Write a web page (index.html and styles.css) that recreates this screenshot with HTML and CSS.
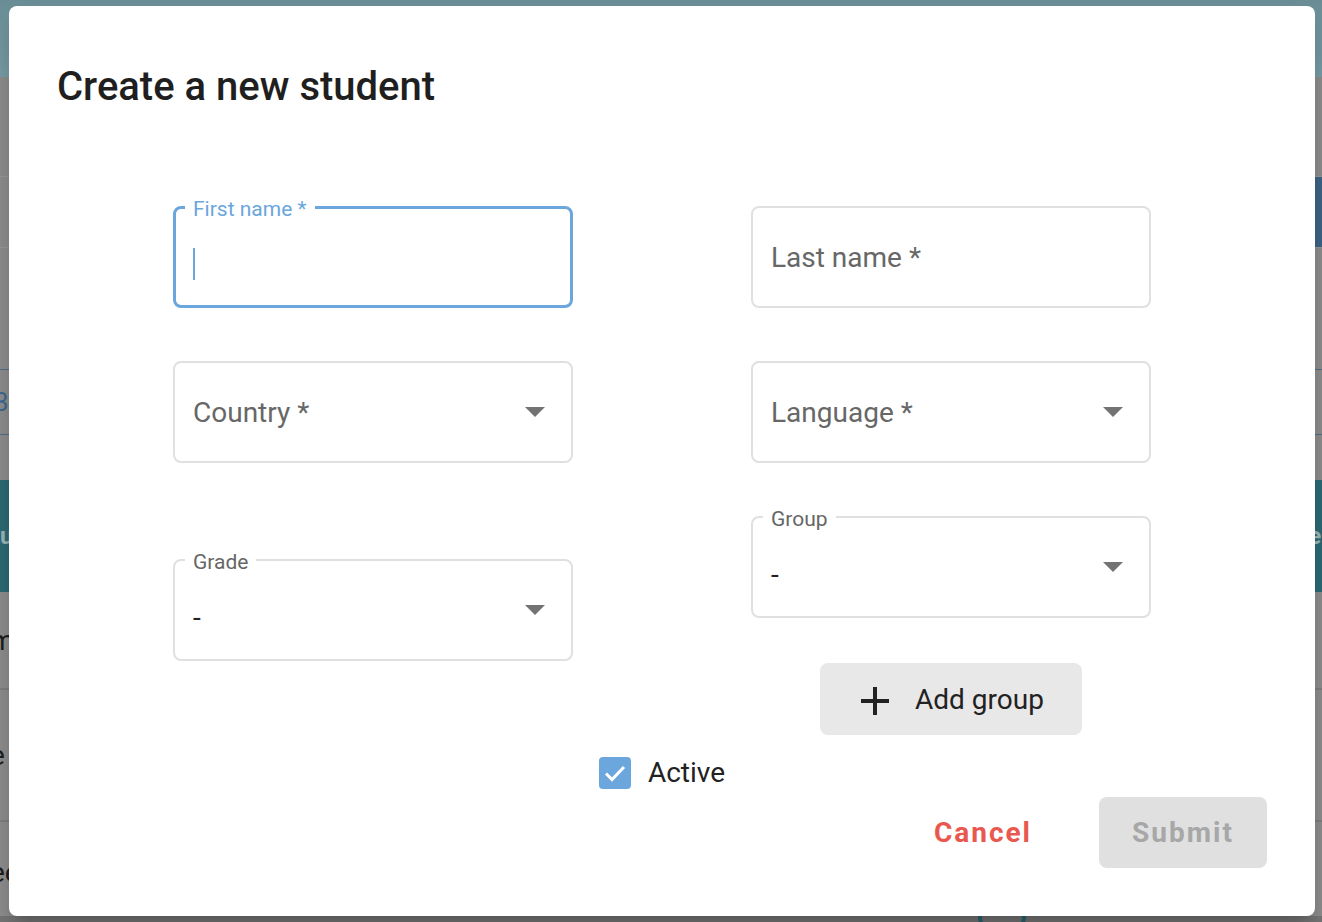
FILE: index.html
```html
<!DOCTYPE html>
<html lang="en">
<head>
<meta charset="utf-8">
<title>Create a new student</title>
<link rel="stylesheet" href="styles.css">
</head>
<body>
<div class="backdrop">
  <div class="bg-header"></div>
  <div class="bg-row bg-row-a"><span class="bg-btn"></span></div>
  <div class="bg-row bg-row-b"><span class="bg-tab">3</span></div>
  <div class="bg-band"><span>tu</span><span>er</span></div>
  <div class="bg-line first">m</div>
  <div class="bg-line">e</div>
  <div class="bg-line last">ee<span class="bg-circle"></span></div>
</div>

<div class="dialog" role="dialog">
  <h1 class="title">Create a new student</h1>

  <div class="form">
    <div class="row">
      <div class="field focused">
        <span class="float-label">First name *</span>
        <span class="caret"></span>
      </div>
      <div class="field">
        <span class="placeholder">Last name *</span>
      </div>
    </div>

    <div class="row">
      <div class="field select">
        <span class="placeholder">Country *</span>
        <span class="arrow"></span>
      </div>
      <div class="field select">
        <span class="placeholder">Language *</span>
        <span class="arrow"></span>
      </div>
    </div>

    <div class="row row-last">
      <div class="col col-grade">
        <div class="field select filled">
          <span class="float-label">Grade</span>
          <span class="value">-</span>
          <span class="arrow"></span>
        </div>
      </div>
      <div class="col col-group">
        <div class="field select filled">
          <span class="float-label">Group</span>
          <span class="value">-</span>
          <span class="arrow"></span>
        </div>
        <button class="add-group" type="button">
          <svg class="plus" width="30" height="30" viewBox="0 0 30 30" aria-hidden="true">
            <path d="M15 1v28M1 15h28" stroke="#222" stroke-width="4" fill="none"/>
          </svg>
          <span>Add group</span>
        </button>
      </div>
    </div>

    <label class="active">
      <span class="checkbox">
        <svg width="32" height="32" viewBox="0 0 32 32" aria-hidden="true">
          <path d="M7 16.5l6 6L25 10" stroke="#fff" stroke-width="3" fill="none"/>
        </svg>
      </span>
      <span class="active-text">Active</span>
    </label>
  </div>

  <div class="actions">
    <button class="btn-cancel" type="button">Cancel</button>
    <button class="btn-submit" type="button">Submit</button>
  </div>
</div>
</body>
</html>
```

FILE: styles.css
```css
* { box-sizing: border-box; }
html, body { margin: 0; padding: 0; }
body {
  width: 1322px;
  height: 922px;
  overflow: hidden;
  font-family: Roboto, "Liberation Sans", Arial, sans-serif;
  background: #8f8f8f;
  position: relative;
}

/* dimmed page behind the dialog */
.backdrop {
  display: flex;
  flex-direction: column;
  height: 922px;
}
.bg-header {
  height: 77px;
  background: linear-gradient(#6b8e96, #7a9fa8);
}
.bg-row { display: flex; align-items: stretch; }
.bg-row-a {
  margin-top: 99px;
  height: 72px;
  border-top: 1px solid #9a9a9a;
  border-bottom: 1px solid #9a9a9a;
}
.bg-btn {
  margin-left: auto;
  width: 30px;
  background: #3f6587;
}
.bg-row-b {
  margin-top: 121px;
  height: 66px;
  border-top: 1px solid #4d6f8c;
  border-bottom: 1px solid #4d6f8c;
}
.bg-tab {
  font-size: 26px;
  color: #3e6a93;
  line-height: 64px;
  margin-left: -6px;
}
.bg-band {
  margin-top: 45px;
  height: 112px;
  background: #2e6b76;
  display: flex;
  justify-content: space-between;
  align-items: center;
  color: #9fb8bd;
  font-size: 24px;
  font-weight: 700;
}
.bg-band span:first-child { margin-left: -8px; }
.bg-band span:last-child { margin-right: -8px; }
.bg-line {
  height: 132px;
  border-bottom: 2px solid #808080;
  font-size: 28px;
  color: #1e1e1e;
  display: flex;
  align-items: center;
  text-indent: -10px;
}
.bg-line.first { height: 98px; }
.bg-line.last {
  border-bottom: none;
  flex: 1;
  background: linear-gradient(#8f8f8f 0 94px, #777 94px);
  position: relative;
}
.bg-circle {
  position: absolute;
  left: 978px;
  top: 70px;
  width: 48px;
  height: 48px;
  border: 4px solid #2a6772;
  border-radius: 50%;
}

/* dialog */
.dialog {
  position: absolute;
  left: 9px;
  top: 6px;
  width: 1306px;
  height: 910px;
  background: #fff;
  border-radius: 8px;
  box-shadow: 0 11px 15px -7px rgba(0,0,0,.2), 0 24px 38px 3px rgba(0,0,0,.14);
  display: flex;
  flex-direction: column;
}
.title {
  margin: 57px 0 0 48px;
  font-size: 40px;
  line-height: 47px;
  font-weight: 500;
  color: #1f1f1f;
  letter-spacing: 0;
}

.form {
  margin-top: 96px;
  padding: 0 164px;
  display: flex;
  flex-direction: column;
}
.row {
  display: flex;
  justify-content: space-between;
  margin-bottom: 53px;
}
.row-last { margin-bottom: 21px; align-items: flex-start; }
.col { width: 400px; display: flex; flex-direction: column; align-items: center; }
.col-grade { padding-top: 43px; }

.field {
  position: relative;
  width: 400px;
  height: 102px;
  border: 2px solid #e0e0e0;
  border-radius: 8px;
  display: flex;
  align-items: center;
  padding: 0 18px;
}
.field.focused {
  border: 3px solid #6ba6dd;
  padding: 0 17px;
}
.float-label {
  position: absolute;
  left: 10px;
  top: -11px;
  padding: 0 8px;
  background: #fff;
  font-size: 21px;
  line-height: 24px;
  color: #666;
}
.focused .float-label {
  left: 9px;
  top: -12px;
  color: #6ba6dd;
}
.caret {
  width: 2px;
  height: 32px;
  background: #6ba6dd;
  margin-top: 14px;
}
.placeholder {
  font-size: 28px;
  color: #676767;
}
.value {
  font-size: 28px;
  color: #222;
  padding-top: 14px;
}
.arrow {
  position: absolute;
  right: 26px;
  top: 50%;
  margin-top: -5px;
  width: 0;
  height: 0;
  border-left: 10px solid transparent;
  border-right: 10px solid transparent;
  border-top: 10px solid #737373;
}

.add-group {
  margin-top: 45px;
  width: 262px;
  height: 72px;
  border: none;
  border-radius: 8px;
  background: #e8e8e8;
  display: flex;
  align-items: center;
  justify-content: center;
  gap: 25px;
  font-family: inherit;
  font-size: 28px;
  color: #222;
  padding: 0 0 0 2px;
}
.plus { margin-top: 4px; }

.active {
  align-self: center;
  display: flex;
  align-items: center;
  gap: 17px;
}
.checkbox {
  width: 32px;
  height: 32px;
  border-radius: 4px;
  background: #6ba6dd;
  display: flex;
}
.active-text {
  font-size: 28px;
  color: #222;
}

.actions {
  margin-top: 8px;
  padding-right: 48px;
  display: flex;
  justify-content: flex-end;
  align-items: center;
}
.btn-cancel {
  border: none;
  background: none;
  font-family: inherit;
  font-size: 28px;
  font-weight: 700;
  letter-spacing: 2px;
  color: #e8584f;
  padding: 0 34px;
  margin-right: 33px;
  height: 71px;
}
.btn-submit {
  border: none;
  width: 168px;
  height: 71px;
  border-radius: 8px;
  background: #e0e0e0;
  color: #a7a7a7;
  font-family: inherit;
  font-size: 28px;
  font-weight: 700;
  letter-spacing: 2px;
}
```
